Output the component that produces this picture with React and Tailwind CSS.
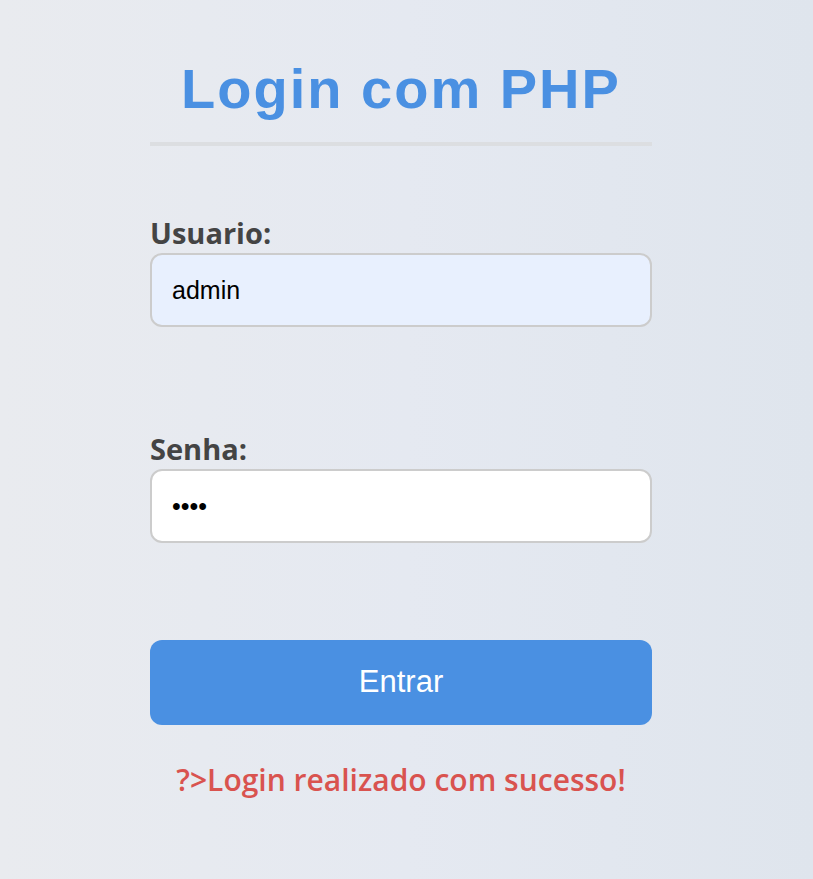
import React, { useState } from 'react';

export default function App() {
  const [usuario, setUsuario] = useState('admin');
  const [senha, setSenha] = useState('1234');

  return (
    <div className="min-h-screen w-full bg-[linear-gradient(90deg,#e9ebef_0%,#e5e9f1_50%,#dfe5ed_100%)]">
      <div className="ml-[150px] w-[502px] pt-[57px]">
        {/* Titulo */}
        <h1 className="text-center font-['Liberation_Sans',Arial,sans-serif] text-[56px] leading-[64px] font-bold tracking-[2px] text-[#4a90e2]">
          Login com PHP
        </h1>
        <div className="mt-[21px] h-[4px] w-full bg-[#dcdee1]" />

        <form className="mt-[69px] flex flex-col" onSubmit={(e) => e.preventDefault()}>
          <label className="mb-[2px] font-['Open_Sans',sans-serif] text-[29px] leading-[36px] font-bold text-[#444]">
            Usuario:
          </label>
          <input
            type="text"
            value={usuario}
            onChange={(e) => setUsuario(e.target.value)}
            className="h-[74px] w-full rounded-[12px] border-2 border-[#cccccc] bg-[#e8f0fe] px-[20px] font-['Liberation_Sans',Arial,sans-serif] text-[25px] text-black outline-none"
          />

          <label className="mt-[104px] mb-[2px] font-['Open_Sans',sans-serif] text-[29px] leading-[36px] font-bold text-[#444]">
            Senha:
          </label>
          <input
            type="password"
            value={senha}
            onChange={(e) => setSenha(e.target.value)}
            className="h-[74px] w-full rounded-[12px] border-2 border-[#cccccc] bg-white px-[20px] font-['Liberation_Sans',Arial,sans-serif] text-[25px] text-black outline-none"
          />

          <button
            type="submit"
            className="mt-[97px] h-[85px] w-full rounded-[12px] bg-[#4a90e2] font-['Liberation_Sans',Arial,sans-serif] text-[31px] text-white"
          >
            Entrar
          </button>
        </form>

        <p className="mt-[35px] text-center font-['Open_Sans',sans-serif] text-[30px] leading-[40px] font-semibold text-[#d9534f]">
          ?&gt;Login realizado com sucesso!
        </p>
      </div>
    </div>
  );
}
